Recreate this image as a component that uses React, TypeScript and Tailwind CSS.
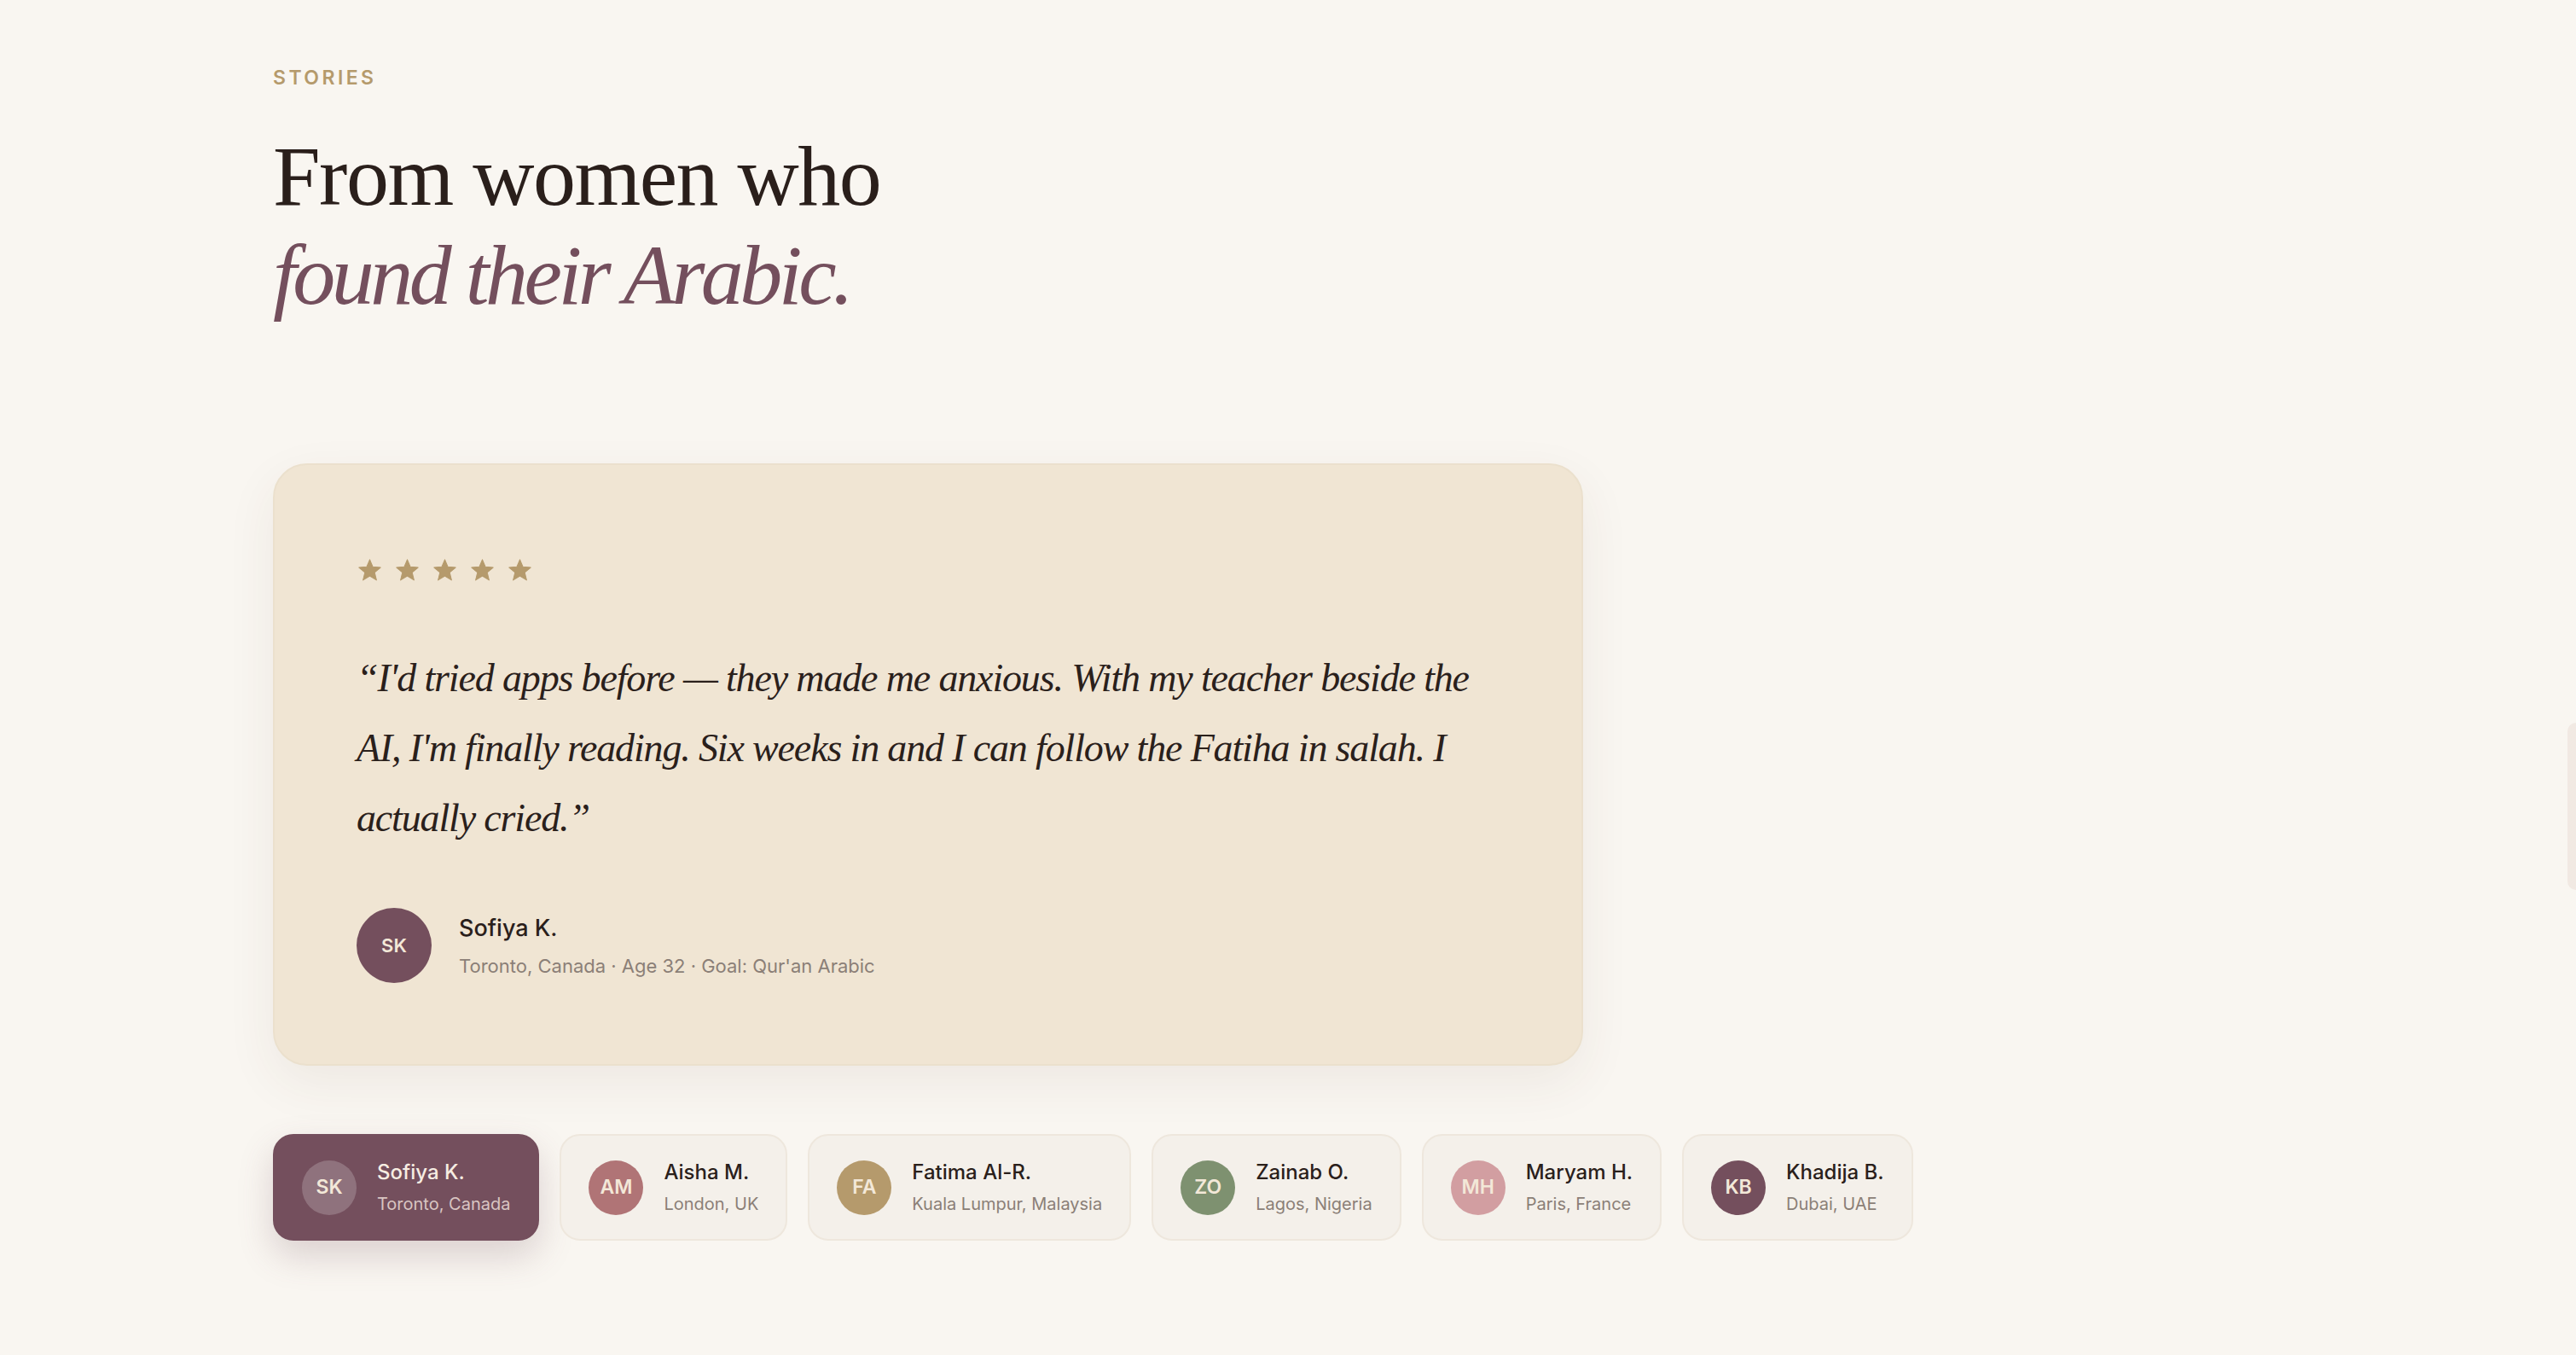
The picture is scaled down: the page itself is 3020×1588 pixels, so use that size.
import React from "react";

type Story = {
  initials: string;
  name: string;
  place: string;
  avatar: string;
};

const stories: Story[] = [
  { initials: "SK", name: "Sofiya K.", place: "Toronto, Canada", avatar: "bg-[#744f5d]" },
  { initials: "AM", name: "Aisha M.", place: "London, UK", avatar: "bg-[#b07476]" },
  { initials: "FA", name: "Fatima Al-R.", place: "Kuala Lumpur, Malaysia", avatar: "bg-[#b59a6c]" },
  { initials: "ZO", name: "Zainab O.", place: "Lagos, Nigeria", avatar: "bg-[#7e9170]" },
  { initials: "MH", name: "Maryam H.", place: "Paris, France", avatar: "bg-[#d29ea1]" },
  { initials: "KB", name: "Khadija B.", place: "Dubai, UAE", avatar: "bg-[#744f5d]" },
];

const sans = "font-['Inter','Noto_Sans',sans-serif]";
const serif = "font-['Liberation_Serif','DejaVu_Serif',serif]";

function Star() {
  return (
    <svg viewBox="0 0 24 24" className="h-[31px] w-[31px]" fill="#b59a6c">
      <path
        d="M12 2.2l2.75 6.55 7.05.55-5.4 4.6 1.7 6.9L12 17.05 5.9 20.8l1.7-6.9-5.4-4.6 7.05-.55z"
        stroke="#b59a6c"
        strokeWidth="0.8"
        strokeLinejoin="round"
      />
    </svg>
  );
}

function StoryTab({ story, active }: { story: Story; active: boolean }) {
  return (
    <button
      className={
        active
          ? "flex items-center gap-6 rounded-[24px] border-2 border-[#744f5d] bg-[#744f5d] px-8 py-[27px] text-left shadow-[0_18px_40px_rgba(116,79,93,0.22)]"
          : "flex items-center gap-6 rounded-[24px] border-2 border-[#eee7dd] bg-[#f4f0ea] px-8 py-[27px] text-left"
      }
    >
      <span
        className={
          "flex h-16 w-16 shrink-0 items-center justify-center rounded-full text-[23px] font-semibold text-[#f3e8d8] " +
          (active ? "bg-white/20" : story.avatar)
        }
      >
        {story.initials}
      </span>
      <span className="flex flex-col gap-[7px]">
        <span
          className={
            active
              ? "text-[24px] font-medium leading-[32px] text-[#f6ede2]"
              : "text-[24px] font-medium leading-[32px] text-[#2a201b]"
          }
        >
          {story.name}
        </span>
        <span
          className={
            active
              ? "text-[20px] leading-[28px] text-[#d9c5c2]"
              : "text-[20px] leading-[28px] text-[#8b7f77]"
          }
        >
          {story.place}
        </span>
      </span>
    </button>
  );
}

export default function App() {
  return (
    <div className={`min-h-screen bg-[#f9f6f1] pl-[320px] pt-[73px] ${sans}`}>
      <p className="text-[23px] font-semibold uppercase leading-[36px] tracking-[0.15em] text-[#b59a6c]">
        Stories
      </p>

      <h2 className={`mt-[41px] text-[100px] font-normal leading-[114px] ${serif}`}>
        <span className="block tracking-[-0.015em] text-[#2a1f1b]">From women who</span>
        <span className="block pt-[2px] italic tracking-[-0.045em] text-[#744f5d]">found their Arabic.</span>
      </h2>

      <div className="mt-[163px] w-[1536px] rounded-[40px] border-2 border-[#ebe0cd] bg-[#f0e5d3] px-[96px] pb-[95px] pt-[96px] shadow-[0_20px_60px_rgba(90,60,40,0.07)]">
        <div className="mt-[12px] flex gap-[13px]">
          <Star />
          <Star />
          <Star />
          <Star />
          <Star />
        </div>

        <blockquote
          className={`mt-[70px] max-w-[1340px] text-[46px] italic leading-[82px] tracking-[-0.025em] text-[#2a201b] ${serif}`}
        >
          “I'd tried apps before — they made me anxious. With my teacher beside the AI, I'm finally
          reading. Six weeks in and I can follow the Fatiha in salah. I actually cried.”
        </blockquote>

        <div className="mt-[64px] flex items-center gap-8">
          <div className="flex h-[88px] w-[88px] items-center justify-center rounded-full bg-[#744f5d] text-[22px] font-semibold text-[#f3e8d8]">
            SK
          </div>
          <div className="flex flex-col gap-[11px]">
            <span className="text-[27px] font-medium leading-[36px] text-[#2a201b]">Sofiya K.</span>
            <span className="text-[22px] leading-[30px] text-[#8b7f77]">
              Toronto, Canada · Age 32 · Goal: Qur'an Arabic
            </span>
          </div>
        </div>
      </div>

      <div className="mt-[80px] flex gap-6">
        {stories.map((s, i) => (
          <StoryTab key={s.initials + s.name} story={s} active={i === 0} />
        ))}
      </div>

      <div className="fixed right-0 top-[847px] h-[196px] w-[10px] rounded-l-[10px] bg-[#f1e9e3]" />
    </div>
  );
}
